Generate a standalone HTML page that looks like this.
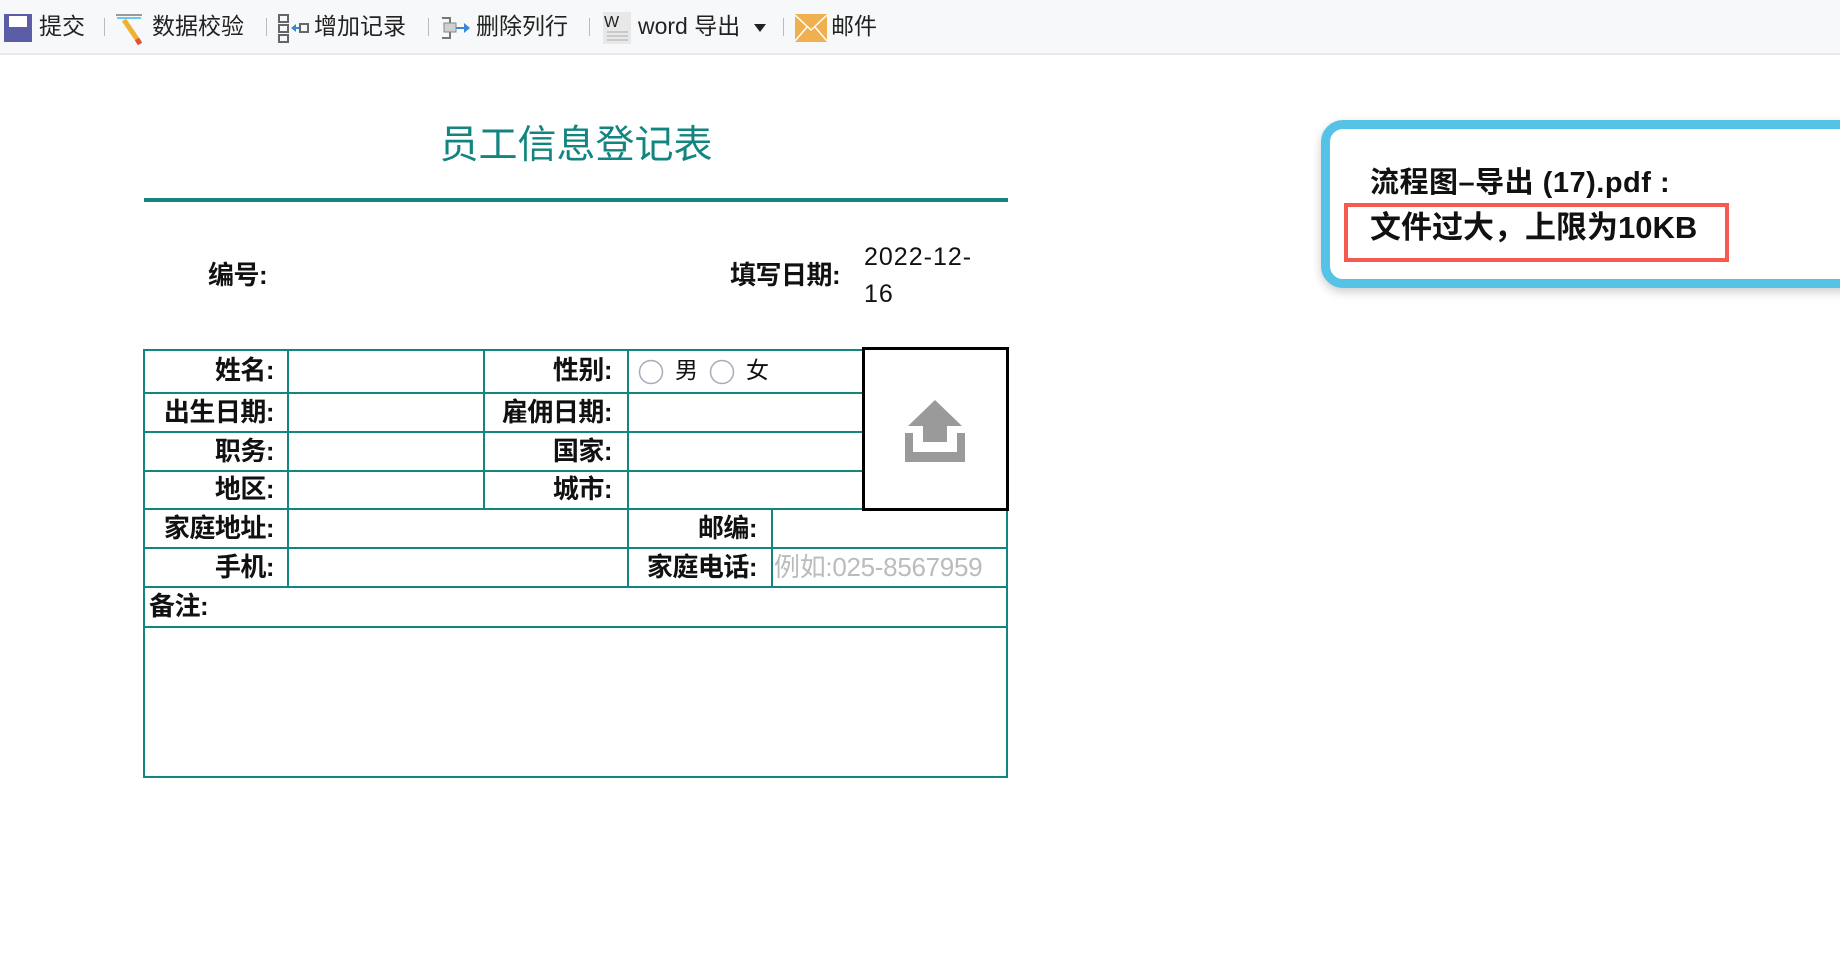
<!DOCTYPE html>
<html><head><meta charset="utf-8"><style>
*{margin:0;padding:0;box-sizing:border-box}
body{width:1840px;height:962px;background:#fff;position:relative;overflow:hidden;font-family:"Liberation Sans","Noto Sans CJK SC",sans-serif;color:#111}
.a{position:absolute;white-space:nowrap}
.tb{position:absolute;left:0;top:0;width:1840px;height:55px;background:#f7f8fa;border-bottom:2px solid #e6e8eb}
.ti{position:absolute;top:11px;font-size:23px;line-height:30px;color:#222}
.sep{position:absolute;top:18px;width:1px;height:18px;background:#bbb}
.h{position:absolute;background:#138580}
.lb{position:absolute;font-weight:bold;font-size:26px;line-height:39px;text-align:right;letter-spacing:-0.5px}
</style></head><body>
<div class="tb">
 <svg class="a" style="left:3px;top:13px" width="30" height="30"><rect x="1" y="1" width="28" height="28" fill="#5b5ea6"/><rect x="6" y="3" width="18" height="11" fill="#fff"/></svg>
 <div class="ti" style="left:39px">提交</div>
 <div class="sep" style="left:104px"></div>
 <svg class="a" style="left:115px;top:12px" width="32" height="34"><rect x="1" y="2" width="26" height="2" fill="#999"/><rect x="2" y="5" width="24" height="2" fill="#6cc6ee"/><line x1="9" y1="8" x2="24" y2="30" stroke="#f0b030" stroke-width="5"/><line x1="22" y1="27" x2="25" y2="32" stroke="#e5503b" stroke-width="5"/></svg>
 <div class="ti" style="left:152px">数据校验</div>
 <div class="sep" style="left:266px"></div>
 <svg class="a" style="left:278px;top:14px" width="32" height="30"><rect x="1" y="1" width="9" height="7" fill="none" stroke="#666" stroke-width="2"/><rect x="1" y="11" width="9" height="7" fill="none" stroke="#666" stroke-width="2"/><rect x="1" y="21" width="9" height="7" fill="none" stroke="#666" stroke-width="2"/><path d="M13 14 L18 10 L18 18 Z" fill="#3a86d8"/><line x1="17" y1="14" x2="22" y2="14" stroke="#3a86d8" stroke-width="2"/><rect x="22" y="10" width="8" height="8" fill="none" stroke="#666" stroke-width="2"/></svg>
 <div class="ti" style="left:314px">增加记录</div>
 <div class="sep" style="left:428px"></div>
 <svg class="a" style="left:440px;top:14px" width="32" height="30"><path d="M2 4 H10 V24 H2" fill="none" stroke="#777" stroke-width="2"/><rect x="4" y="9" width="12" height="9" fill="#d0d0d0" stroke="#888"/><line x1="16" y1="14" x2="24" y2="14" stroke="#3a86d8" stroke-width="2"/><path d="M24 9 L30 14 L24 19 Z" fill="#3a86d8"/></svg>
 <div class="ti" style="left:476px">删除列行</div>
 <div class="sep" style="left:589px"></div>
 <svg class="a" style="left:602px;top:11px" width="30" height="34"><rect x="1" y="1" width="28" height="32" fill="#e8e8e8"/><text x="2" y="16" font-size="16" font-family="Liberation Sans" fill="#222">W</text><line x1="5" y1="21" x2="26" y2="21" stroke="#aaa"/><line x1="5" y1="25" x2="26" y2="25" stroke="#aaa"/><line x1="5" y1="29" x2="26" y2="29" stroke="#aaa"/></svg>
 <div class="ti" style="left:638px">word 导出</div>
 <svg class="a" style="left:754px;top:24px" width="12" height="8"><path d="M0 0 H12 L6 8Z" fill="#222"/></svg>
 <div class="sep" style="left:783px"></div>
 <svg class="a" style="left:795px;top:14px" width="32" height="28"><rect x="0" y="0" width="32" height="28" fill="#f0b050"/><path d="M0 1 L16 16 L32 1 M0 27 L12 13 M32 27 L20 13" stroke="#fff" stroke-width="1.5" fill="none"/></svg>
 <div class="ti" style="left:831px">邮件</div>
</div>

<div class="a" style="left:144px;width:864px;top:120px;text-align:center;font-size:39px;line-height:52px;color:#138580">员工信息登记表</div>
<div class="h" style="left:144px;top:198px;width:864px;height:4px"></div>

<div class="lb" style="left:208px;top:256px">编号:</div>
<div class="lb" style="left:730px;top:256px">填写日期:</div>
<div class="a" style="left:864px;top:239px;font-size:25px;line-height:37px;letter-spacing:1px">2022-12-<br>16</div>

<!-- table grid -->
<div class="h" style="left:144px;top:349px;width:718px;height:2px"></div>
<div class="h" style="left:144px;top:392px;width:718px;height:2px"></div>
<div class="h" style="left:144px;top:431px;width:718px;height:2px"></div>
<div class="h" style="left:144px;top:470px;width:718px;height:2px"></div>
<div class="h" style="left:144px;top:508px;width:864px;height:2px"></div>
<div class="h" style="left:144px;top:547px;width:864px;height:2px"></div>
<div class="h" style="left:144px;top:586px;width:864px;height:2px"></div>
<div class="h" style="left:144px;top:626px;width:864px;height:2px"></div>
<div class="h" style="left:144px;top:776px;width:864px;height:2px"></div>
<div class="h" style="left:143px;top:349px;width:2px;height:429px"></div>
<div class="h" style="left:287px;top:349px;width:2px;height:238px"></div>
<div class="h" style="left:483px;top:349px;width:2px;height:160px"></div>
<div class="h" style="left:627px;top:349px;width:2px;height:238px"></div>
<div class="h" style="left:771px;top:508px;width:2px;height:79px"></div>
<div class="h" style="left:1006px;top:508px;width:2px;height:270px"></div>

<div class="a" style="left:862px;top:347px;width:147px;height:164px;border:3px solid #000;background:#fff"></div>
<svg class="a" style="left:904px;top:400px" width="62" height="62"><path d="M31 0 L58 26 H43 V42 H19 V26 H4 Z" fill="#9a9a9a"/><path d="M1 33 H9 V52 H53 V33 H61 V62 H1 Z" fill="#9a9a9a"/></svg>

<div class="lb" style="left:144px;width:130px;top:351px">姓名:</div>
<div class="lb" style="left:485px;width:127px;top:351px">性别:</div>
<svg class="a" style="left:638px;top:359px" width="26" height="26"><circle cx="13" cy="13" r="11.5" fill="#fff" stroke="#aab" stroke-width="1.5"/></svg>
<div class="a" style="left:675px;top:351px;font-size:23px;line-height:39px">男</div>
<svg class="a" style="left:709px;top:359px" width="26" height="26"><circle cx="13" cy="13" r="11.5" fill="#fff" stroke="#aab" stroke-width="1.5"/></svg>
<div class="a" style="left:746px;top:351px;font-size:23px;line-height:39px">女</div>

<div class="lb" style="left:144px;width:130px;top:393px">出生日期:</div>
<div class="lb" style="left:485px;width:127px;top:393px">雇佣日期:</div>
<div class="lb" style="left:144px;width:130px;top:432px">职务:</div>
<div class="lb" style="left:485px;width:127px;top:432px">国家:</div>
<div class="lb" style="left:144px;width:130px;top:470px">地区:</div>
<div class="lb" style="left:485px;width:127px;top:470px">城市:</div>
<div class="lb" style="left:144px;width:130px;top:509px">家庭地址:</div>
<div class="lb" style="left:629px;width:128px;top:509px">邮编:</div>
<div class="lb" style="left:144px;width:130px;top:548px">手机:</div>
<div class="lb" style="left:629px;width:128px;top:548px">家庭电话:</div>
<div class="a" style="left:774px;top:548px;font-size:26px;line-height:39px;color:#bbb;letter-spacing:-0.3px">例如:025-8567959</div>
<div class="lb" style="left:149px;top:587px;text-align:left">备注:</div>

<!-- popup -->
<div class="a" style="left:1321px;top:120px;width:560px;height:168px;border:9px solid #55c3e6;border-radius:22px;background:#fff;box-shadow:0 4px 10px rgba(0,0,0,.2)"></div>
<div class="a" style="left:1370px;top:164px;font-size:29px;font-weight:bold;line-height:38px;letter-spacing:0.5px">流程图–导出 (17).pdf :</div>
<div class="a" style="left:1344px;top:203px;width:385px;height:59px;border:4px solid #f55a4e"></div>
<div class="a" style="left:1370px;top:207px;font-size:31px;font-weight:bold;line-height:42px">文件过大，上限为10KB</div>
</body></html>
